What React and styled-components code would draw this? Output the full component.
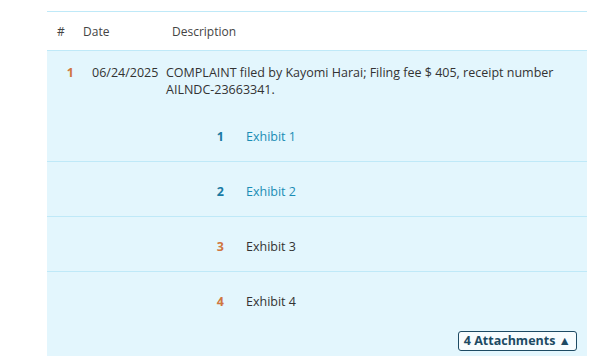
import React from "react"
import styled, { createGlobalStyle } from "styled-components"

const attachments = [
  { n: 1, name: "Exhibit 1", linked: true },
  { n: 2, name: "Exhibit 2", linked: true },
  { n: 3, name: "Exhibit 3", linked: false },
  { n: 4, name: "Exhibit 4", linked: false },
]

const App = () => {
  return (
    <Page>
      <GlobalStyle />
      <Table>
        <HeadRow>
          <HeadCell width="26px">#</HeadCell>
          <HeadCell width="89px">Date</HeadCell>
          <HeadCell>Description</HeadCell>
        </HeadRow>
        <Body>
          <EntryRow>
            <EntryNum>1</EntryNum>
            <EntryDate>06/24/2025</EntryDate>
            <EntryText>
              COMPLAINT filed by Kayomi Harai; Filing fee $ 405, receipt number
              AILNDC-23663341.
            </EntryText>
          </EntryRow>
          {attachments.map((a, i) => (
            <AttachRow key={a.n} last={i === attachments.length - 1}>
              <AttachNum linked={a.linked}>{a.n}</AttachNum>
              <AttachName linked={a.linked}>{a.name}</AttachName>
            </AttachRow>
          ))}
          <Footer>
            <ToggleButton>4 Attachments ▲</ToggleButton>
          </Footer>
        </Body>
      </Table>
    </Page>
  )
}
export default App

const GlobalStyle = createGlobalStyle`
  body {
    margin: 0;
    background: #ffffff;
    font-family: "Open Sans", "Noto Sans", sans-serif;
    color: #333333;
  }
`

const Page = styled.div`
  padding: 11px 26px 0 47px;
  width: 613px;
  height: 358px;
  box-sizing: border-box;
  overflow: hidden;
`

const Table = styled.div`
  width: 540px;
  border-top: 1px solid #bfe9f8;
`

const HeadRow = styled.div`
  display: flex;
  align-items: center;
  height: 38px;
  padding-left: 10px;
  border-bottom: 1px solid #bfe9f8;
  font-size: 12px;
  color: #444444;
`

const HeadCell = styled.div`
  width: ${p => p.width || "auto"};
  flex: ${p => (p.width ? "none" : "1")};
`

const Body = styled.div`
  background: #e3f6fd;
  padding-bottom: 5px;
`

const EntryRow = styled.div`
  display: flex;
  align-items: flex-start;
  padding-top: 13px;
  height: 43px;
  font-size: 12.5px;
  line-height: 17px;
  color: #333333;
`

const EntryNum = styled.div`
  width: 27px;
  text-align: right;
  font-weight: bold;
  color: #d0773f;
  flex: none;
`

const EntryDate = styled.div`
  width: 92px;
  padding-left: 18px;
  flex: none;
  box-sizing: border-box;
`

const EntryText = styled.div`
  flex: 1;
  padding-right: 20px;
`

const AttachRow = styled.div`
  display: flex;
  align-items: center;
  height: 55px;
  padding-top: 4px;
  box-sizing: border-box;
  border-bottom: ${p => (p.last ? "none" : "1px solid #bfe9f8")};
  font-size: 12.5px;
`

const AttachNum = styled.div`
  width: 177px;
  text-align: right;
  font-weight: bold;
  color: ${p => (p.linked ? "#1a7aa3" : "#d0773f")};
  flex: none;
`

const AttachName = styled.div`
  padding-left: 22px;
  color: ${p => (p.linked ? "#1a8db5" : "#333333")};
`

const Footer = styled.div`
  display: flex;
  justify-content: flex-end;
  padding: 4px 10px 0 0;
`

const ToggleButton = styled.button`
  font-family: "Open Sans", "Noto Sans", sans-serif;
  font-size: 12.5px;
  font-weight: bold;
  color: #1d4a63;
  background: #f7fcfe;
  border: 1px solid #1d4a63;
  border-radius: 3px;
  height: 20px;
  box-sizing: border-box;
  padding: 0 5px;
  line-height: 18px;
  cursor: pointer;
`
